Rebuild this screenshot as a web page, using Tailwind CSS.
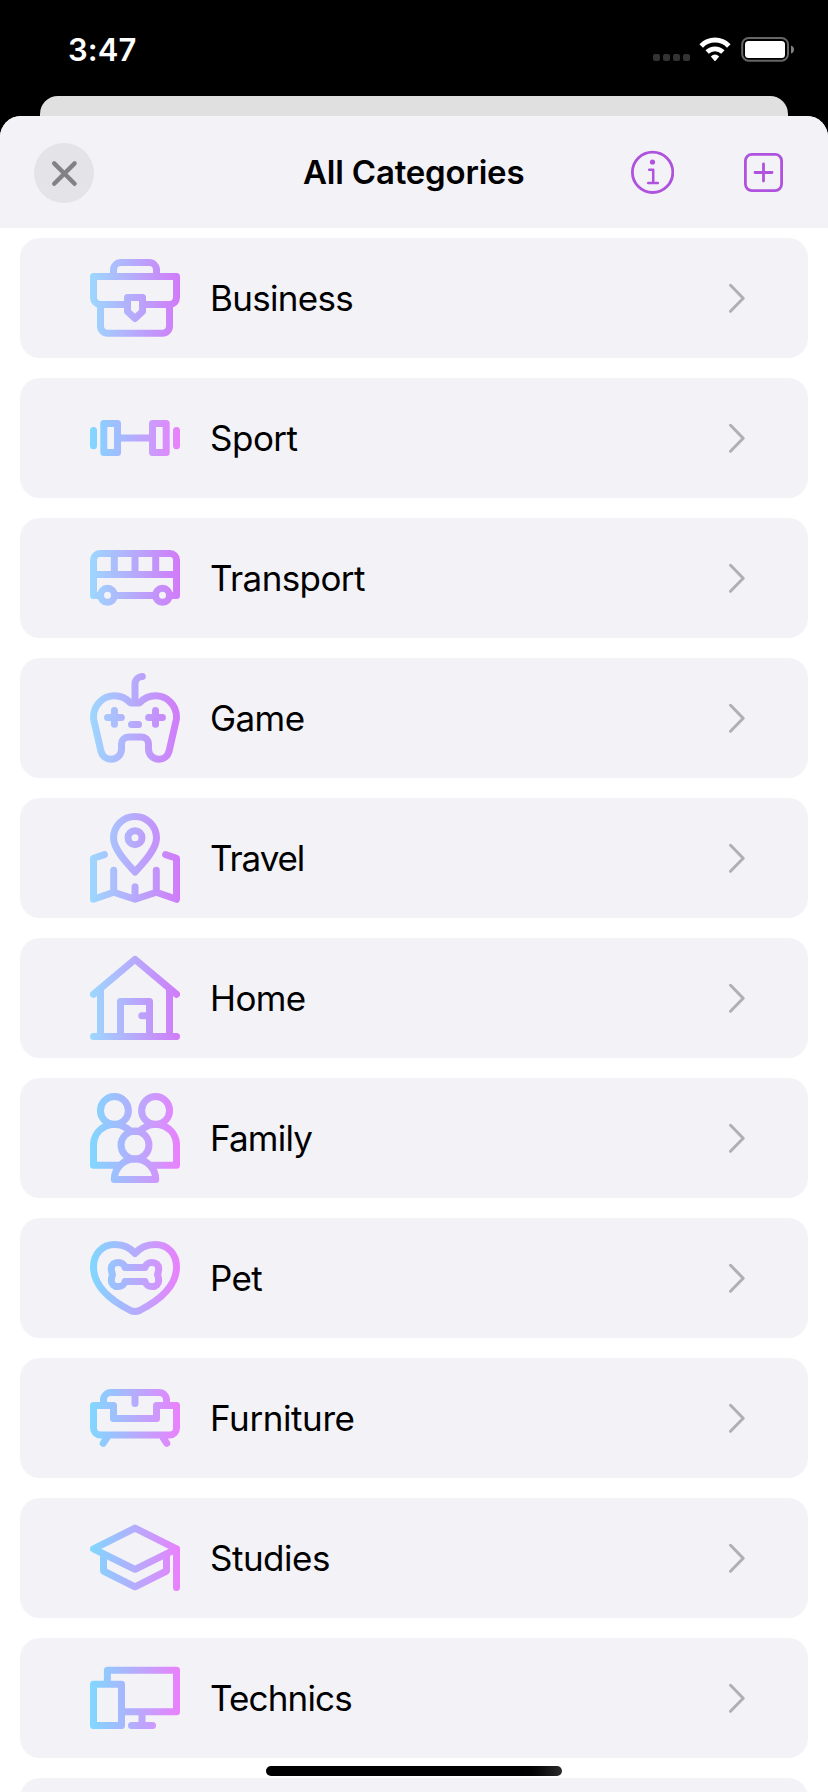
<!DOCTYPE html>
<html lang="en">
<head>
<meta charset="utf-8">
<title>All Categories</title>
<script src="https://cdn.jsdelivr.net/npm/@tailwindcss/browser@4"></script>
</head>
<body class="bg-black">
<svg class="absolute size-0" aria-hidden="true">
  <defs>
    <linearGradient id="soft" gradientUnits="userSpaceOnUse" x1="0" y1="45" x2="90" y2="45"><stop offset="0" stop-color="#9cd8ff"/><stop offset="1" stop-color="#d27af9"/></linearGradient>
    <linearGradient id="vivid" gradientUnits="userSpaceOnUse" x1="0" y1="45" x2="90" y2="45"><stop offset="0" stop-color="#80d8ff"/><stop offset="1" stop-color="#ea80fc"/></linearGradient>
    <symbol id="chevron" viewBox="0 0 18 30"><path d="M2.5 2.3 15.2 15.3 2.5 28.3" fill="none" stroke="#b0b0b4" stroke-width="3" stroke-linecap="round" stroke-linejoin="round"/></symbol>
  </defs>
</svg>
<div class="relative flex h-[1792px] w-[828px] flex-col overflow-hidden bg-black font-['Inter','Liberation_Sans',sans-serif] text-black">
  <!-- Status bar -->
  <div class="flex h-24 shrink-0 items-start justify-between pl-[68px] pr-[33px] text-white">
    <span class="mt-[30px] text-[31px] leading-10 font-semibold tracking-[0.1px]">3:47</span>
    <div class="mt-9 flex">
      <div class="mt-[18px] flex gap-[3px]">
        <i class="size-[7px] rounded-[2px] bg-[#333]"></i><i class="size-[7px] rounded-[2px] bg-[#333]"></i><i class="size-[7px] rounded-[2px] bg-[#333]"></i><i class="size-[7px] rounded-[2px] bg-[#333]"></i>
      </div>
      <svg class="ml-[9px] h-7 w-8" viewBox="0 0 32 28" fill="none" stroke="#fff" stroke-width="5"><path d="M2.2 9.9a19.3 19.3 0 0 1 27.6 0" /><path d="M8.1 16.1a11.4 11.4 0 0 1 15.8 0" stroke-width="4.8"/><path d="M11.8 20.5Q16 16.5 20.2 20.5L16.6 24.7Q16 25.3 15.4 24.7Z" fill="#fff" stroke="none"/></svg>
      <svg class="ml-[10px] h-7 w-[54px]" viewBox="0 0 54 28"><rect x="1.2" y="2" width="45.8" height="22.7" rx="6.5" fill="none" stroke="#666" stroke-width="2"/><rect x="4" y="5" width="40" height="17" rx="3.5" fill="#fff"/><path d="M50 9.5q3 1 3 4t-3 4z" fill="#808080"/></svg>
    </div>
  </div>
  <div class="mx-10 h-5 shrink-0 rounded-t-[18px] bg-[#e0e0e0]"></div>
  <!-- Sheet -->
  <div class="flex min-h-0 flex-1 flex-col overflow-hidden rounded-t-[21px] bg-white">
    <header class="flex h-28 shrink-0 items-center bg-[#f2f2f7] pl-[34px] pr-[44px]">
      <button class="mt-[2px] size-[60px] rounded-full bg-[#e3e3e8]"><svg class="size-[60px]" viewBox="0 0 60 60"><path d="M20.2 20.4 40.6 40.8M40.6 20.4 20.2 40.8" stroke="#828187" stroke-width="4.4" stroke-linecap="round"/></svg></button>
      <h1 class="ml-[209px] w-[230px] text-[33px] leading-10 font-semibold tracking-[-0.2px] whitespace-nowrap">All Categories</h1>
      <svg class="ml-[97px] h-11 w-11" viewBox="0 0 44 44" fill="none" stroke="#af52de" stroke-width="2.8" stroke-linecap="round"><circle cx="22.6" cy="22.3" r="20.2"/><circle cx="22.5" cy="12" r="2.6" fill="#af52de" stroke="none"/><path d="M19.2 19.7h4v13.3M18.2 33h9.6" stroke-width="2.5" stroke-linejoin="round"/></svg>
      <svg class="ml-auto h-11 w-10" viewBox="0 0 40 44" fill="none" stroke="#af52de" stroke-width="2.8" stroke-linecap="round"><rect x="1.4" y="4.4" width="36.2" height="36.2" rx="6.5"/><path d="M19.5 14v17M11 22.5h17"/></svg>
    </header>
    <ul class="mt-[10px] flex flex-col gap-5 px-5 text-[35px] tracking-[-0.6px]">
      <li class="flex h-[120px] shrink-0 items-center rounded-[20px] bg-[#f2f2f7] pr-[62px] pl-[70px]">
        <svg class="size-[90px]" viewBox="0 0 90 90" fill="none" stroke="url(#soft)" stroke-width="7" stroke-linecap="round" stroke-linejoin="round"><path d="M23.5 23.5V17a7.5 7.5 0 0 1 7.5-7.5H59a7.5 7.5 0 0 1 7.5 7.5V23.5M37.5 51.5H10.5a7 7 0 0 1-7-7V23.5H86.5V44.5a7 7 0 0 1-7 7H52.5M10.5 51.5V73a7 7 0 0 0 7 7.2H72.5a7 7 0 0 0 7-7.2V51.5M37.5 44.5H52.5V58.5L45 65.5 37.5 58.5Z"/></svg>
        <span class="ml-[30px] flex-1 tracking-[-0.7px]">Business</span><svg class="h-[30px] w-[18px]"><use href="#chevron"/></svg>
      </li>
      <li class="flex h-[120px] shrink-0 items-center rounded-[20px] bg-[#f2f2f7] pr-[62px] pl-[70px]">
        <svg class="size-[90px]" viewBox="0 0 90 90" fill="none" stroke="url(#vivid)" stroke-width="7" stroke-linecap="round" stroke-linejoin="round"><path d="M3.5 37.5V52.8M86.5 37.5V52.8M13.8 30.6H27.5V59.4H13.8ZM62.5 30.6H76.2V59.4H62.5ZM27.5 45H62.5"/></svg>
        <span class="ml-[30px] flex-1 tracking-[-0.5px]">Sport</span><svg class="h-[30px] w-[18px]"><use href="#chevron"/></svg>
      </li>
      <li class="flex h-[120px] shrink-0 items-center rounded-[20px] bg-[#f2f2f7] pr-[62px] pl-[70px]">
        <svg class="size-[90px]" viewBox="0 0 90 90" fill="none" stroke="url(#soft)" stroke-width="7" stroke-linecap="round" stroke-linejoin="round"><path d="M10 62.5H3.5V27a6.5 6.5 0 0 1 6.5-6.5H80a6.5 6.5 0 0 1 6.5 6.5V62.5H80M3.5 41.5H86.5M24.3 20.5V41.5M45 20.5V41.5M65.7 20.5V41.5M25 62.5H65"/><circle cx="17.5" cy="62.3" r="7"/><circle cx="72.5" cy="62.3" r="7"/></svg>
        <span class="ml-[30px] flex-1">Transport</span><svg class="h-[30px] w-[18px]"><use href="#chevron"/></svg>
      </li>
      <li class="flex h-[120px] shrink-0 items-center rounded-[20px] bg-[#f2f2f7] pr-[62px] pl-[70px]">
        <svg class="size-[90px]" viewBox="0 0 90 90" fill="none" stroke="url(#soft)" stroke-width="7" stroke-linecap="round" stroke-linejoin="round"><path d="M45 29V11a7.5 7.5 0 0 1 7.3-7.5M3.5 44C3.5 32 13 22.8 24.5 22.8 31 22.8 36 25 40.5 30H49.5C54 25 59 22.8 65.5 22.8 77 22.8 86.5 32 86.5 44Q86.5 45.5 86.2 47L79 78.5C77.7 83 74 86.3 69 86.3 63 86.3 58.5 81.5 58.5 76V71a7 7 0 0 0-7-7h-13a7 7 0 0 0-7 7V76C31.5 81.5 27 86.3 21 86.3 16 86.3 12.3 83 11 78.5L3.8 47Q3.5 45.5 3.5 44ZM17.5 44.4h13.8M24.4 37.5v13.8M58.6 44.4h13.8M65.5 37.5v13.8M41.5 51.4h7"/></svg>
        <span class="ml-[30px] flex-1">Game</span><svg class="h-[30px] w-[18px]"><use href="#chevron"/></svg>
      </li>
      <li class="flex h-[120px] shrink-0 items-center rounded-[20px] bg-[#f2f2f7] pr-[62px] pl-[70px]">
        <svg class="size-[90px]" viewBox="0 0 90 90" fill="none" stroke="url(#soft)" stroke-width="7" stroke-linecap="round" stroke-linejoin="round"><path d="M45 59C36 49.5 23.5 36 23.5 25A21.5 21.5 0 0 1 66.5 25C66.5 36 54 49.5 45 59ZM14.4 41.6 3.5 45.2V86.3L23.7 79.2 45 86.3 66.3 79.2 86.5 86.3V45.2L75.6 41.6M23.7 57.2V79M66.3 57.2V79M45 73.8V86"/><circle cx="45" cy="24.7" r="7"/></svg>
        <span class="ml-[30px] flex-1 tracking-[-1.1px]">Travel</span><svg class="h-[30px] w-[18px]"><use href="#chevron"/></svg>
      </li>
      <li class="flex h-[120px] shrink-0 items-center rounded-[20px] bg-[#f2f2f7] pr-[62px] pl-[70px]">
        <svg class="size-[90px]" viewBox="0 0 90 90" fill="none" stroke="url(#soft)" stroke-width="7" stroke-linecap="round" stroke-linejoin="round"><path d="M3.5 41.3 45 6.4 86.5 41.3M10.5 37V83.5M79.5 37V83.5M3.5 83.5H86.5M30.5 83.5V48.5H59.5V83.5M51.8 62.7H59"/></svg>
        <span class="ml-[30px] flex-1">Home</span><svg class="h-[30px] w-[18px]"><use href="#chevron"/></svg>
      </li>
      <li class="flex h-[120px] shrink-0 items-center rounded-[20px] bg-[#f2f2f7] pr-[62px] pl-[70px]">
        <svg class="size-[90px]" viewBox="0 0 90 90" fill="none" stroke="url(#vivid)" stroke-width="7" stroke-linecap="round" stroke-linejoin="round"><circle cx="24.4" cy="17.5" r="14"/><circle cx="65.6" cy="17.5" r="14"/><circle cx="45" cy="52" r="14"/><path d="M29.5 72.3H3.5V52.3A20.9 20.9 0 0 1 36.5 35.2L41 38.4H49L53.5 35.2M60.5 72.3H86.5V52.3A20.9 20.9 0 0 0 53.5 35.2M24.3 86.5C24.3 75 33.5 66 45 66S65.7 75 65.7 86.5Z"/></svg>
        <span class="ml-[30px] flex-1 tracking-[-0.8px]">Family</span><svg class="h-[30px] w-[18px]"><use href="#chevron"/></svg>
      </li>
      <li class="flex h-[120px] shrink-0 items-center rounded-[20px] bg-[#f2f2f7] pr-[62px] pl-[70px]">
        <svg class="size-[90px]" viewBox="0 0 90 90" fill="none" stroke="url(#vivid)" stroke-width="7" stroke-linecap="round" stroke-linejoin="round"><path d="M45 20.5C40 14.5 34 11.5 25 11.5 12 11.5 3.5 21 3.5 34 3.5 52 18 66 40.5 77.5Q45 79.5 49.5 77.5C72 66 86.5 52 86.5 34 86.5 21 78 11.5 65 11.5 56 11.5 50 14.5 45 20.5Z"/><path d="M35 34.5H55C55.5 31.5 58.5 29.4 62 29.4 66 29.4 68.7 32 68.7 35.5 68.7 38 68 40 67.5 41.5 68 43 68.7 45 68.7 47.5 68.7 51 66 53.6 62 53.6 58.5 53.6 55.5 51.5 55 48.5H35C34.5 51.5 31.5 53.6 28 53.6 24 53.6 21.3 51 21.3 47.5 21.3 45 22 43 22.5 41.5 22 40 21.3 38 21.3 35.5 21.3 32 24 29.4 28 29.4 31.5 29.4 34.5 31.5 35 34.5Z"/></svg>
        <span class="ml-[30px] flex-1">Pet</span><svg class="h-[30px] w-[18px]"><use href="#chevron"/></svg>
      </li>
      <li class="flex h-[120px] shrink-0 items-center rounded-[20px] bg-[#f2f2f7] pr-[62px] pl-[70px]">
        <svg class="size-[90px]" viewBox="0 0 90 90" fill="none" stroke="url(#vivid)" stroke-width="7" stroke-linecap="round" stroke-linejoin="round"><path d="M13.5 32.5V27a7.5 7.5 0 0 1 7.5-7.5H69a7.5 7.5 0 0 1 7.5 7.5V32.5M3.5 32.5H23.5V45.5H66.5V32.5H86.5V55a7 7 0 0 1-7 7H10.5a7 7 0 0 1-7-7ZM45 19.5V30.5M17 64.5 13.2 70.4M73 64.5 76.8 70.4"/></svg>
        <span class="ml-[30px] flex-1 tracking-[-0.4px]">Furniture</span><svg class="h-[30px] w-[18px]"><use href="#chevron"/></svg>
      </li>
      <li class="flex h-[120px] shrink-0 items-center rounded-[20px] bg-[#f2f2f7] pr-[62px] pl-[70px]">
        <svg class="size-[90px]" viewBox="0 0 90 90" fill="none" stroke="url(#vivid)" stroke-width="7" stroke-linecap="round" stroke-linejoin="round"><path d="M3.5 35.8 45 15.1 86.5 35.8 45 56.3ZM13.5 41V58L45 73.8 76.5 58V41M86.5 35.8V74.4"/></svg>
        <span class="ml-[30px] flex-1 tracking-[-0.5px]">Studies</span><svg class="h-[30px] w-[18px]"><use href="#chevron"/></svg>
      </li>
      <li class="flex h-[120px] shrink-0 items-center rounded-[20px] bg-[#f2f2f7] pr-[62px] pl-[70px]">
        <svg class="size-[90px]" viewBox="0 0 90 90" fill="none" stroke="url(#vivid)" stroke-width="7" stroke-linecap="round" stroke-linejoin="round"><path d="M17.4 31.2V17.2H86.5V58.8H31.5M3.5 31.2H31.5V72.5H3.5ZM52 58.8V72.5M41.5 72.5H62.5"/></svg>
        <span class="ml-[30px] flex-1 tracking-[-0.85px]">Technics</span><svg class="h-[30px] w-[18px]"><use href="#chevron"/></svg>
      </li>
      <li class="h-[120px] shrink-0 rounded-[20px] bg-[#f2f2f7]"></li>
    </ul>
  </div>
  <!-- Home indicator -->
  <div class="absolute top-[1766px] left-[266px] h-[10px] w-[296px] rounded-full bg-linear-to-r from-black from-85% to-[#2c2c2c]"></div>
</div>
</body>
</html>
